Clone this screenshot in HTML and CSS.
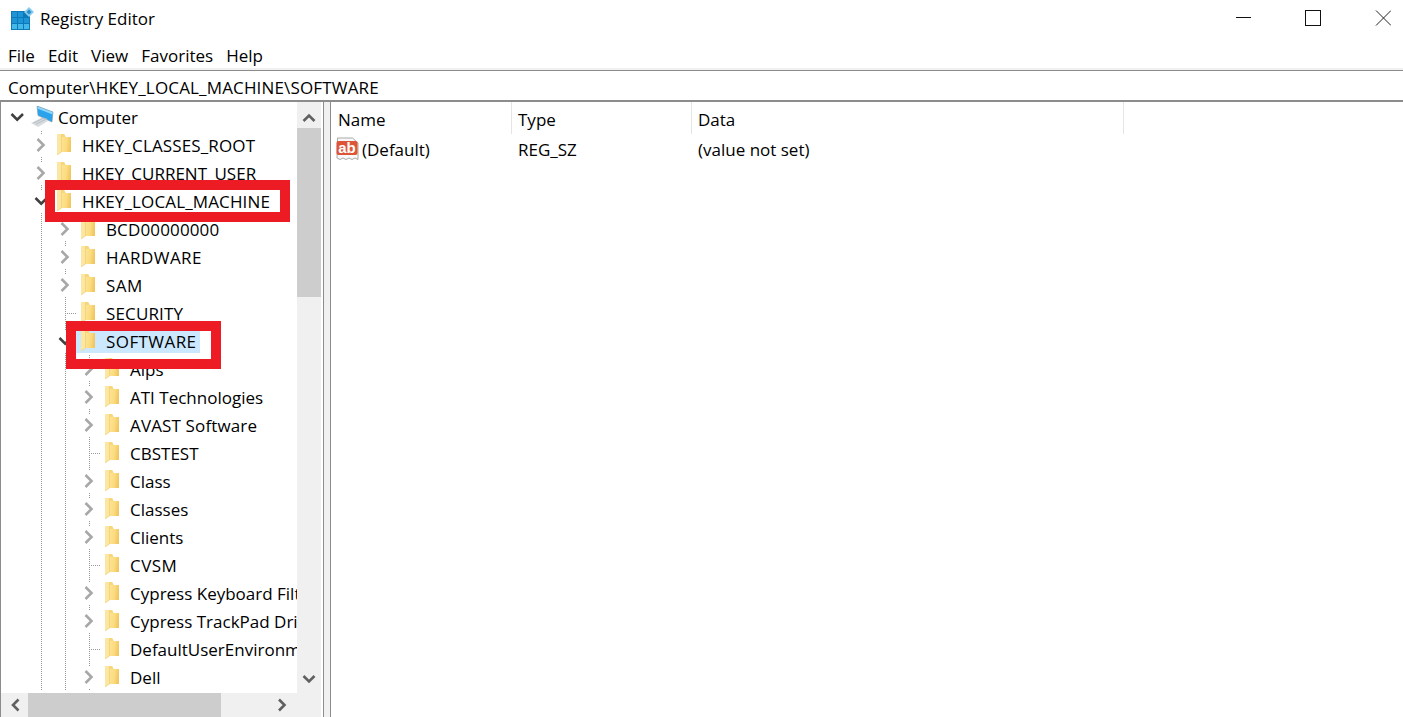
FILE: index.html
```html
<!DOCTYPE html>
<html lang="en">
<head>
<meta charset="utf-8">
<title>Registry Editor</title>
<link rel="stylesheet" href="styles.css">
</head>
<body>
<svg class="defs" width="0" height="0" aria-hidden="true">
  <defs>
    <linearGradient id="fg" x1="0" x2="1" y1="0" y2="0.2">
      <stop offset="0" stop-color="#fde596"/>
      <stop offset="0.6" stop-color="#fbdb7e"/>
      <stop offset="1" stop-color="#f2c662"/>
    </linearGradient>
    <symbol id="folder" viewBox="0 0 15 22">
      <path d="M4 0h3.200l1.500 3H14v15H4z" fill="#f7d67c"/>
      <path d="M4.500 3H14v15H4.500z" fill="url(#fg)"/>
      <path d="M0 0h4.500v18L0 21z" fill="#fbe7a2"/>
      <path d="M4.500 0v18L0 21" fill="none" stroke="#f0cf78" stroke-width=".7"/>
    </symbol>
    <symbol id="right" viewBox="0 0 24 22">
      <path d="M8.500 5l6 6-6 6" fill="none" stroke="#a8a8a8" stroke-width="2.600"/>
    </symbol>
    <symbol id="down" viewBox="0 0 24 22">
      <path d="M6.500 8l5.700 5.700L18 8" fill="none" stroke="#404040" stroke-width="2.600"/>
    </symbol>
  </defs>
</svg>
<div class="app">
  <header class="titlebar">
    <svg class="appicon" width="23" height="24" viewBox="0 0 23 24">
      <rect x="0" y="4" width="19" height="19" fill="#0d79b8"/>
      <path d="M1 5h5v5H1zM7 5h5v5H7zM1 11h5v5H1zM7 11h5v5H7zM13 11h5v5h-5z" fill="#1d94d6"/>
      <path d="M1 17h5v5H1zM7 17h5v5H7zM13 17h5v5h-5z" fill="#45b8ea"/>
      <path d="M18 0l5 5-5 5-5-5z" fill="#8accec"/>
      <path d="M18 2.500l2.500 2.500L18 7.500 15.500 5z" fill="#2a8fc9"/>
    </svg>
    <span class="apptitle">Registry Editor</span>
    <div class="winctl">
      <svg width="16" height="16" viewBox="0 0 16 16"><path d="M1 7.500h15" stroke="#111" stroke-width="1"/></svg>
      <svg width="16" height="16" viewBox="0 0 16 16"><rect x=".5" y=".5" width="15" height="15" fill="none" stroke="#111" stroke-width="1"/></svg>
      <svg width="16" height="16" viewBox="0 0 16 16"><path d="M1 .5l15 15M16 .5l-15 15" stroke="#222" stroke-width="1" fill="none"/></svg>
    </div>
  </header>
  <nav class="menubar">
    <span>File</span><span>Edit</span><span>View</span><span>Favorites</span><span>Help</span>
  </nav>
  <div class="address">Computer\HKEY_LOCAL_MACHINE\SOFTWARE</div>
  <main class="panes">
    <section class="treepane">
      <div class="treeview">
        <div class="tree">
          <div class="row">
            <span class="cell"><svg class="tog"><use href="#down"/></svg></span>
            <span class="node root">
              <svg class="pc" width="24" height="22" viewBox="0 0 24 22">
                <path d="M6 0l16 6-1 10L7 9.500z" fill="#2aa3ec"/>
                <path d="M6 0l16 6-.3 2.500L6.300 2.500z" fill="#8fd8fa"/>
                <path d="M6 0l16 6-1 10L7 9.500z" fill="none" stroke="#7f97aa" stroke-width=".6"/>
                <path d="M10 11l2 3 5 .5-1.500-2z" fill="#b7c0c8"/>
                <path d="M0 17l10-5 7 3-10 6z" fill="#d8dcdf"/>
                <path d="M2.500 17l9-4.400M4.800 18.200l9-4.400" stroke="#a8afb6" stroke-width=".7"/>
              </svg>
              <span>Computer</span>
            </span>
          </div>

          <div class="row"><span class="cell"></span><span class="cell guide"><svg class="tog"><use href="#right"/></svg></span><span class="node"><svg class="folder"><use href="#folder"/></svg><span class="caps">HKEY_CLASSES_ROOT</span></span></div>
          <div class="row"><span class="cell"></span><span class="cell guide"><svg class="tog"><use href="#right"/></svg></span><span class="node"><svg class="folder"><use href="#folder"/></svg><span>HKEY_CURRENT_USER</span></span></div>
          <div class="row"><span class="cell"></span><span class="cell guide"><svg class="tog"><use href="#down"/></svg></span><span class="node"><svg class="folder"><use href="#folder"/></svg><span class="caps">HKEY_LOCAL_MACHINE</span></span></div>

          <div class="row"><span class="cell"></span><span class="cell guide"></span><span class="cell guide"><svg class="tog"><use href="#right"/></svg></span><span class="node"><svg class="folder"><use href="#folder"/></svg><span class="caps">BCD00000000</span></span></div>
          <div class="row"><span class="cell"></span><span class="cell guide"></span><span class="cell guide"><svg class="tog"><use href="#right"/></svg></span><span class="node"><svg class="folder"><use href="#folder"/></svg><span class="wide">HARDWARE</span></span></div>
          <div class="row"><span class="cell"></span><span class="cell guide"></span><span class="cell guide"><svg class="tog"><use href="#right"/></svg></span><span class="node"><svg class="folder"><use href="#folder"/></svg><span class="wide">SAM</span></span></div>
          <div class="row"><span class="cell"></span><span class="cell guide"></span><span class="cell guide leaf"></span><span class="node"><svg class="folder"><use href="#folder"/></svg><span class="caps">SECURITY</span></span></div>
          <div class="row"><span class="cell"></span><span class="cell guide"></span><span class="cell guide"><svg class="tog"><use href="#down"/></svg></span><span class="node selected"><svg class="folder"><use href="#folder"/></svg><span class="wide">SOFTWARE</span></span></div>

          <div class="row"><span class="cell"></span><span class="cell guide"></span><span class="cell guide"></span><span class="cell guide"><svg class="tog"><use href="#right"/></svg></span><span class="node"><svg class="folder"><use href="#folder"/></svg><span>Alps</span></span></div>
          <div class="row"><span class="cell"></span><span class="cell guide"></span><span class="cell guide"></span><span class="cell guide"><svg class="tog"><use href="#right"/></svg></span><span class="node"><svg class="folder"><use href="#folder"/></svg><span>ATI Technologies</span></span></div>
          <div class="row"><span class="cell"></span><span class="cell guide"></span><span class="cell guide"></span><span class="cell guide"><svg class="tog"><use href="#right"/></svg></span><span class="node"><svg class="folder"><use href="#folder"/></svg><span class="caps">AVAST Software</span></span></div>
          <div class="row"><span class="cell"></span><span class="cell guide"></span><span class="cell guide"></span><span class="cell guide leaf"></span><span class="node"><svg class="folder"><use href="#folder"/></svg><span>CBSTEST</span></span></div>
          <div class="row"><span class="cell"></span><span class="cell guide"></span><span class="cell guide"></span><span class="cell guide"><svg class="tog"><use href="#right"/></svg></span><span class="node"><svg class="folder"><use href="#folder"/></svg><span>Class</span></span></div>
          <div class="row"><span class="cell"></span><span class="cell guide"></span><span class="cell guide"></span><span class="cell guide"><svg class="tog"><use href="#right"/></svg></span><span class="node"><svg class="folder"><use href="#folder"/></svg><span>Classes</span></span></div>
          <div class="row"><span class="cell"></span><span class="cell guide"></span><span class="cell guide"></span><span class="cell guide"><svg class="tog"><use href="#right"/></svg></span><span class="node"><svg class="folder"><use href="#folder"/></svg><span>Clients</span></span></div>
          <div class="row"><span class="cell"></span><span class="cell guide"></span><span class="cell guide"></span><span class="cell guide leaf"></span><span class="node"><svg class="folder"><use href="#folder"/></svg><span class="wide">CVSM</span></span></div>
          <div class="row"><span class="cell"></span><span class="cell guide"></span><span class="cell guide"></span><span class="cell guide"><svg class="tog"><use href="#right"/></svg></span><span class="node"><svg class="folder"><use href="#folder"/></svg><span>Cypress Keyboard Filter</span></span></div>
          <div class="row"><span class="cell"></span><span class="cell guide"></span><span class="cell guide"></span><span class="cell guide"><svg class="tog"><use href="#right"/></svg></span><span class="node"><svg class="folder"><use href="#folder"/></svg><span>Cypress TrackPad Driver</span></span></div>
          <div class="row"><span class="cell"></span><span class="cell guide"></span><span class="cell guide"></span><span class="cell guide leaf"></span><span class="node"><svg class="folder"><use href="#folder"/></svg><span>DefaultUserEnvironment</span></span></div>
          <div class="row"><span class="cell"></span><span class="cell guide"></span><span class="cell guide"></span><span class="cell guide"><svg class="tog"><use href="#right"/></svg></span><span class="node"><svg class="folder"><use href="#folder"/></svg><span>Dell</span></span></div>
        </div>
        <div class="vscroll">
          <svg class="sbtn" width="24" height="26" viewBox="0 0 24 26"><path d="M6.500 19l5.500-5.500 5.500 5.500" fill="none" stroke="#606060" stroke-width="2.600"/></svg>
          <div class="vtrack"><div class="vthumb"></div></div>
          <svg class="sbtn" width="24" height="24" viewBox="0 0 24 24"><path d="M6.500 7l5.500 5.500L17.500 7" fill="none" stroke="#606060" stroke-width="2.600"/></svg>
        </div>
      </div>
      <div class="hscroll">
        <svg width="26" height="24" viewBox="0 0 26 24"><path d="M17.500 6.500L12 12l5.500 5.500" fill="none" stroke="#606060" stroke-width="2.600"/></svg>
        <div class="htrack"><div class="hthumb"></div></div>
        <svg width="26" height="24" viewBox="0 0 26 24"><path d="M10 6.500l5.500 5.500-5.500 5.500" fill="none" stroke="#606060" stroke-width="2.600"/></svg>
      </div>
    </section>
    <div class="splitter"></div>
    <section class="listpane">
      <div class="listhead">
        <span class="col c1">Name</span><span class="col c2">Type</span><span class="col c3">Data</span>
      </div>
      <div class="listrow">
        <span class="col c1 valname">
          <svg width="24" height="24" viewBox="0 0 24 24">
            <path d="M1.500 1h15l5.500 5v16.500l-3-1.500-3 1.500-3-1.500-3 1.500-3-1.500-3 1.500-3-1.500z" fill="#f8f8f8" stroke="#a8a8a8"/>
            <rect x=".5" y="4" width="21" height="14" rx="2" fill="#de5437"/>
            <text x="11" y="15.500" class="abtext" text-anchor="middle">ab</text>
          </svg>
          <span>(Default)</span>
        </span>
        <span class="col c2">REG_SZ</span>
        <span class="col c3">(value not set)</span>
      </div>
    </section>
  </main>
  <div class="mark mark-a"></div>
  <div class="mark mark-b"></div>
</div>
</body>
</html>
```
FILE: styles.css
```css
* { box-sizing: border-box; }
html, body { margin: 0; padding: 0; background: #fff; }
body {
  font-family: "Open Sans", "Noto Sans", "Liberation Sans", sans-serif;
  font-size: 17px;
  color: #000;
  overflow: hidden;
}
.defs { position: absolute; }
.app {
  position: relative;
  width: 1403px;
  height: 717px;
  display: flex;
  flex-direction: column;
  overflow: hidden;
}
.titlebar {
  height: 40px;
  flex: none;
  display: flex;
  align-items: center;
  padding: 0 12px 0 11px;
}
.appicon { margin-right: 6px; flex: none; margin-top: -3px; }
.apptitle { margin-top: -3px; }
.winctl {
  margin-left: auto;
  display: flex;
  gap: 54px;
  margin-top: -4px;
}
.menubar {
  height: 30px;
  flex: none;
  display: flex;
  align-items: center;
  gap: 13px;
  padding: 2px 0 0 8px;
  border-bottom: 2px solid #f0f0f0;
}
.address {
  height: 32px;
  flex: none;
  display: flex;
  align-items: center;
  padding: 3px 0 0 8px;
  letter-spacing: .16px;
  border-top: 1px solid #8c8c8c;
  border-bottom: 2px solid #8c8c8c;
}
.panes {
  flex: 1;
  min-height: 0;
  display: flex;
}
.treepane {
  width: 324px;
  flex: none;
  display: flex;
  flex-direction: column;
  border-left: 1px solid #8c8c8c;
  border-right: 1px solid #8c8c8c;
  padding-right: 2px;
}
.treeview {
  flex: 1;
  min-height: 0;
  display: flex;
}
.tree {
  flex: 1;
  min-width: 0;
  overflow: hidden;
  padding: 1px 0 0 4px;
}
.row {
  height: 28px;
  display: flex;
  align-items: center;
  white-space: nowrap;
}
.cell {
  width: 24px;
  height: 28px;
  flex: none;
  display: flex;
  align-items: center;
}
.guide {
  background-image: linear-gradient(#9a9a9a 50%, transparent 50%);
  background-size: 1px 2px;
  background-repeat: repeat-y;
  background-position: 12px 0;
}
.leaf {
  background-image:
    linear-gradient(#9a9a9a 50%, transparent 50%),
    repeating-linear-gradient(90deg, #9a9a9a 0 1px, transparent 1px 2px);
  background-size: 1px 2px, 12px 1px;
  background-repeat: repeat-y, no-repeat;
  background-position: 12px 0, 12px 14px;
}
.tog {
  width: 24px;
  height: 22px;
  display: block;
  background: #fff;
}
.node {
  display: flex;
  align-items: center;
  gap: 10px;
  height: 23px;
  padding: 0 4px;
}
.root { gap: 3px; padding-left: 2px; }
.selected {
  background: #cce8ff;
  margin-left: -1px;
  padding-left: 5px;
}
.caps { letter-spacing: .14px; }
.wide { letter-spacing: .42px; }
.folder {
  width: 15px;
  height: 22px;
  flex: none;
}
.pc { flex: none; }
.vscroll {
  width: 24px;
  flex: none;
  display: flex;
  flex-direction: column;
  background: #f0f0f0;
}
.sbtn { display: block; flex: none; }
.vtrack { flex: 1; min-height: 0; }
.vthumb { height: 169px; background: #cdcdcd; }
.hscroll {
  height: 24px;
  flex: none;
  display: flex;
  padding-right: 26px;
  background: #f0f0f0;
}
.htrack { flex: 1; }
.hthumb { width: 193px; margin-left: 1px; height: 100%; background: #cdcdcd; }
.splitter {
  width: 6px;
  flex: none;
  background: #f0f0f0;
}
.listpane {
  flex: 1;
  min-width: 0;
  border-left: 1px solid #8c8c8c;
}
.listhead, .listrow {
  display: flex;
  align-items: center;
}
.listhead { height: 32px; }
.listrow { height: 28px; padding-top: 2px; }
.col { flex: none; padding-left: 6px; }
.c1 { width: 181px; padding-left: 7px; }
.c2 { width: 180px; }
.c3 { width: 432px; }
.listhead .col {
  height: 32px;
  padding-top: 2px;
  display: flex;
  align-items: center;
  border-right: 1px solid #e5e5e5;
}
.valname {
  display: flex;
  align-items: center;
  gap: 2px;
  padding-left: 5px;
}
.abtext {
  font: 700 15px "Liberation Sans", sans-serif;
  fill: #fff;
}
.mark {
  position: absolute;
  border: 10px solid #ed1c24;
}
.mark-a { left: 45px; top: 180px; width: 245px; height: 42px; }
.mark-b { left: 66px; top: 321px; width: 155px; height: 48px; }
```
